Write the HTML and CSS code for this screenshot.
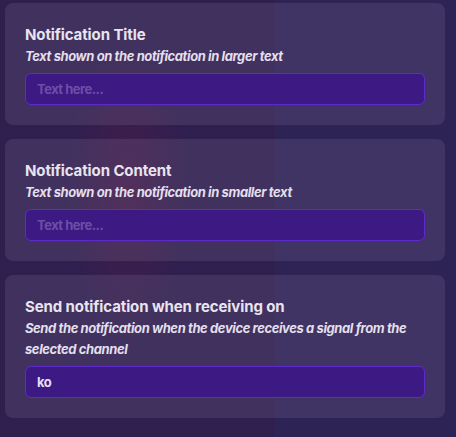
FILE: index.html
```html
<!DOCTYPE html>
<html lang="en">
<head>
<meta charset="utf-8">
<title>Notification settings</title>
<link rel="stylesheet" href="styles.css">
</head>
<body>
<main class="panel">
  <section class="card">
    <h2 class="card-title">Notification Title</h2>
    <p class="card-desc">Text shown on the notification in larger text</p>
    <input class="field" type="text" placeholder="Text here...">
  </section>
  <section class="card">
    <h2 class="card-title">Notification Content</h2>
    <p class="card-desc">Text shown on the notification in smaller text</p>
    <input class="field" type="text" placeholder="Text here...">
  </section>
  <section class="card">
    <h2 class="card-title">Send notification when receiving on</h2>
    <p class="card-desc">Send the notification when the device receives a signal from the selected channel</p>
    <input class="field" type="text" value="ko">
  </section>
</main>
</body>
</html>
```
FILE: styles.css
```css
html, body {
  margin: 0;
  height: 100%;
}
body {
  background-color: #2d2355;
  background-image:
    radial-gradient(ellipse 60px 150px at 128px 190px, rgba(110, 25, 70, 0.3), rgba(110, 25, 70, 0) 100%),
    linear-gradient(90deg, rgba(55, 18, 55, 0.2) 0, rgba(55, 18, 55, 0.2) 275px, rgba(0, 0, 0, 0) 275px);
  font-family: Inter, "Noto Sans", "Liberation Sans", sans-serif;
  color: #e9e5f2;
  overflow: hidden;
}
.panel {
  display: flex;
  flex-direction: column;
  gap: 14px;
  padding: 3px 11px 0 5px;
}
.card {
  background: rgba(255, 240, 255, 0.085);
  border-radius: 8px;
  padding: 20px;
  display: flex;
  flex-direction: column;
}
.card-title {
  margin: 0;
  font-size: 15px;
  line-height: 23px;
  font-weight: 700;
  letter-spacing: -0.1px;
  color: #e8e4f0;
}
.card-desc {
  margin: 0 0 6px;
  font-size: 13px;
  line-height: 21px;
  font-weight: 700;
  font-style: italic;
  letter-spacing: -0.4px;
  color: #e3dfec;
}
.field {
  box-sizing: border-box;
  height: 32px;
  width: 100%;
  margin: 0;
  padding: 0 11px;
  background: #3d1983;
  border: 1px solid #5d2bcb;
  border-radius: 6px;
  font-family: inherit;
  font-size: 13px;
  font-weight: 700;
  letter-spacing: -0.5px;
  color: #e4def0;
  outline: none;
}
.field::placeholder {
  color: #6b4fa6;
  opacity: 1;
}
```
